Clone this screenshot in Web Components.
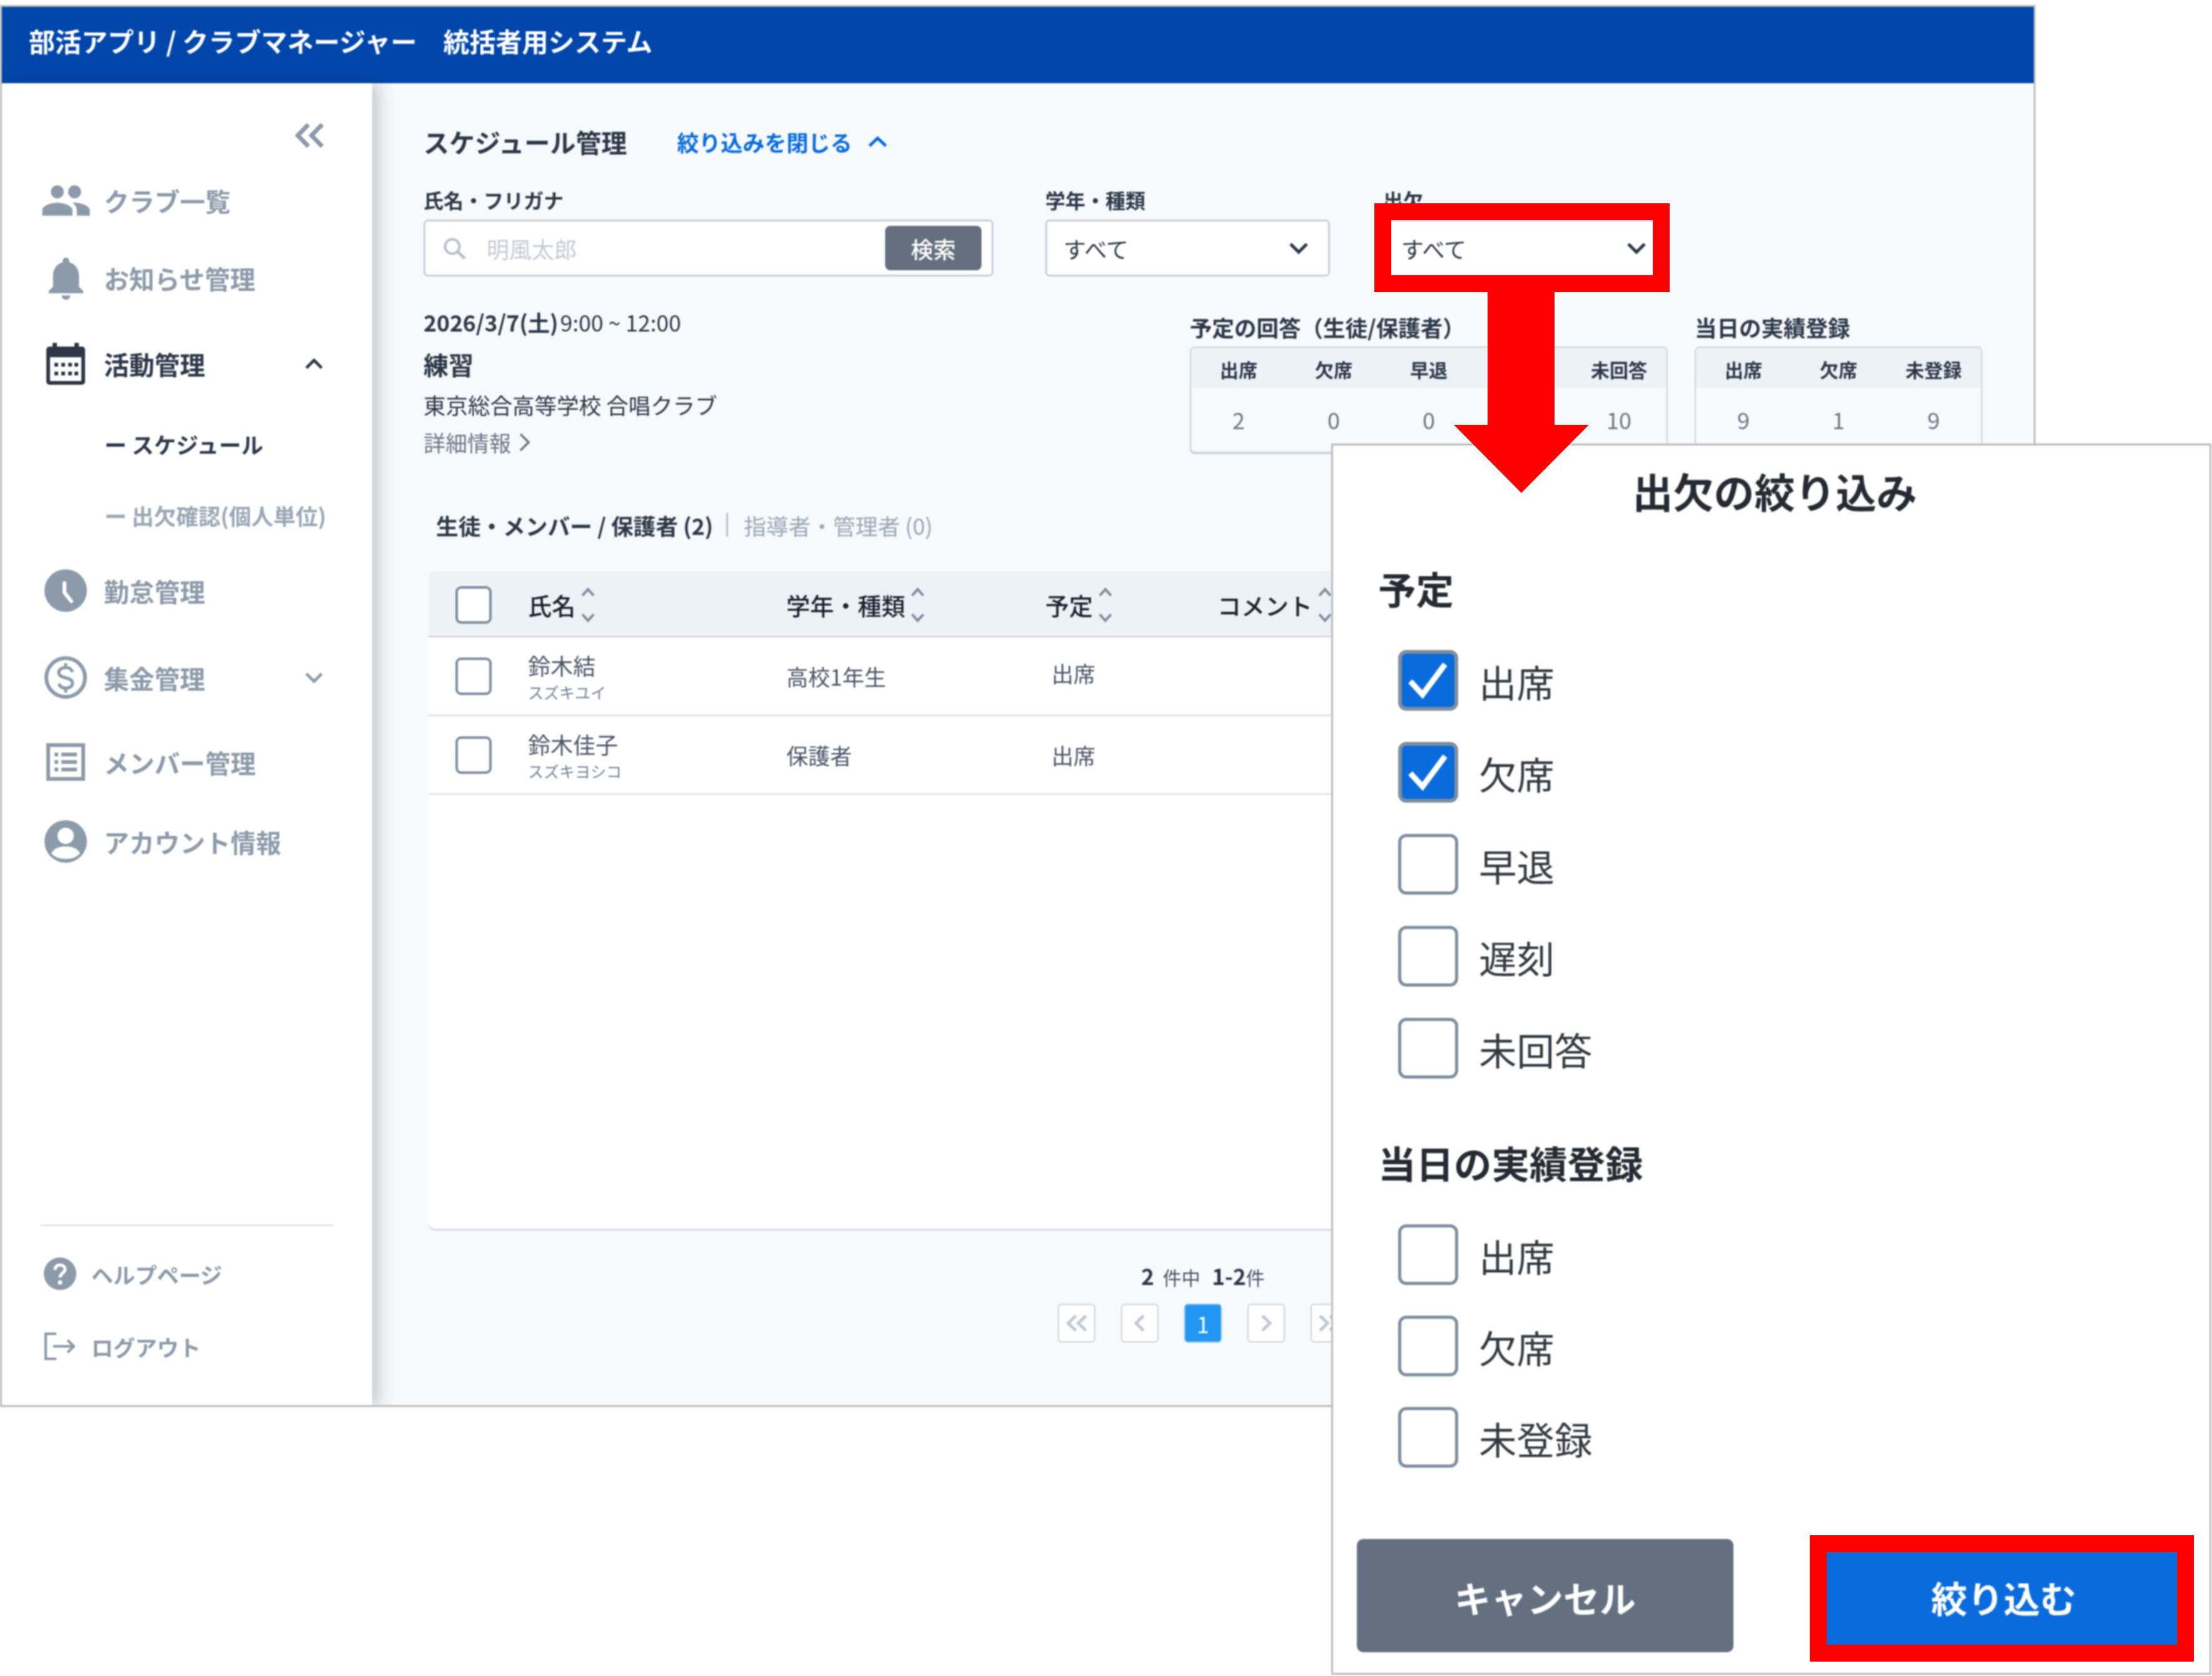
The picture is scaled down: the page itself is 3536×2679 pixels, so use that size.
<!DOCTYPE html>
<html lang="ja">
<head>
<meta charset="utf-8">
<title>スケジュール管理</title>
<style>
html,body{margin:0;padding:0;background:#fff}
body{width:3536px;height:2679px;position:relative;overflow:hidden;font-family:"Noto Sans CJK JP","Noto Sans",sans-serif;color:#2d3748}
</style>
</head>
<body>
<app-window>
  <app-header slot="header">部活アプリ / クラブマネージャー　統括者用システム</app-header>
  <app-sidebar slot="side">
    <nav-item icon="people" label="クラブ一覧" style="margin-top:43px"></nav-item>
    <nav-item icon="bell" label="お知らせ管理" style="margin-top:44px"></nav-item>
    <nav-item icon="calendar" label="活動管理" active chev="up" style="margin-top:57px"></nav-item>
    <nav-sub label="ー スケジュール" active style="margin-top:58px"></nav-sub>
    <nav-sub label="ー 出欠確認(個人単位)" style="margin-top:54px"></nav-sub>
    <nav-item icon="clock" label="勤怠管理" style="margin-top:51px"></nav-item>
    <nav-item icon="dollar" label="集金管理" chev="down" style="margin-top:59px"></nav-item>
    <nav-item icon="list" label="メンバー管理" style="margin-top:55px"></nav-item>
    <nav-item icon="account" label="アカウント情報" style="margin-top:47px"></nav-item>
    <nav-foot slot="foot" icon="help" label="ヘルプページ"></nav-foot>
    <nav-foot slot="foot" icon="logout" label="ログアウト" style="margin-top:56px"></nav-foot>
  </app-sidebar>
  <schedule-page slot="main">
    <page-title>スケジュール管理</page-title>
    <filter-bar></filter-bar>
    <event-summary></event-summary>
    <member-tabs></member-tabs>
    <member-table></member-table>
    <page-nav></page-nav>
  </schedule-page>
</app-window>

<attendance-popup></attendance-popup>
<red-annotations></red-annotations>

<script>
const ICONS={
people:['0 0 24 24','<path fill="currentColor" d="M16 11c1.66 0 2.99-1.34 2.99-3S17.66 5 16 5c-1.66 0-3 1.34-3 3s1.34 3 3 3zm-8 0c1.66 0 2.99-1.34 2.99-3S9.66 5 8 5C6.34 5 5 6.34 5 8s1.34 3 3 3zm0 2c-2.33 0-7 1.17-7 3.5V19h14v-2.5c0-2.33-4.67-3.5-7-3.5zm8 0c-.29 0-.62.02-.97.05 1.16.84 1.97 1.97 1.97 3.45V19h6v-2.5c0-2.33-4.67-3.5-7-3.5z"/>'],
bell:['0 0 24 24','<path fill="currentColor" d="M12 22c1.1 0 2-.9 2-2h-4c0 1.1.89 2 2 2zm6-6v-5c0-3.07-1.64-5.64-4.5-6.32V4c0-.83-.67-1.5-1.5-1.5s-1.5.67-1.5 1.5v.68C7.63 5.36 6 7.92 6 11v5l-2 2v1h16v-1l-2-2z"/>'],
calendar:['0 0 62 67','<path fill="currentColor" d="M10 0h7v6h28V0h7v6h5a5 5 0 0 1 5 5v51a5 5 0 0 1-5 5H5a5 5 0 0 1-5-5V11a5 5 0 0 1 5-5h5z"/><rect x="6" y="23" width="50" height="38" fill="#fff"/><g fill="currentColor"><rect x="13" y="32" width="6" height="6"/><rect x="24" y="32" width="6" height="6"/><rect x="35" y="32" width="6" height="6"/><rect x="45" y="32" width="6" height="6"/><rect x="13" y="46" width="6" height="6"/><rect x="24" y="46" width="6" height="6"/><rect x="35" y="46" width="6" height="6"/><rect x="45" y="46" width="6" height="6"/></g>'],
clock:['0 0 68 68','<circle cx="34" cy="34" r="34" fill="currentColor"/><path d="M32 22v15l11 14" fill="none" stroke="#fff" stroke-width="6" stroke-linecap="round"/>'],
dollar:['0 0 68 68','<circle cx="34" cy="34" r="31" fill="none" stroke="currentColor" stroke-width="6"/><path d="M45 25c-2-5-6-7-11-7-6 0-11 3-11 8 0 11 22 6 22 17 0 5-5 8-11 8-5 0-9-2-11-7M34 11v7M34 51v7" fill="none" stroke="currentColor" stroke-width="5"/>'],
list:['0 0 62 60','<rect x="3" y="3" width="56" height="54" fill="none" stroke="currentColor" stroke-width="6"/><g fill="currentColor"><rect x="13" y="15" width="6" height="6"/><rect x="13" y="27" width="6" height="6"/><rect x="13" y="39" width="6" height="6"/><rect x="24" y="15" width="25" height="6"/><rect x="24" y="27" width="25" height="6"/><rect x="24" y="39" width="25" height="6"/></g>'],
account:['0 0 68 68','<circle cx="34" cy="34" r="34" fill="currentColor"/><circle cx="34" cy="25" r="13" fill="#fff"/><path d="M11 53c5-9 14-11 23-11s18 2 23 11c-5 6-13 9-23 9s-18-3-23-9z" fill="#fff"/>'],
help:['0 0 52 52','<circle cx="26" cy="26" r="26" fill="currentColor"/><path d="M18 20c0-5 3-8 8-8s8 3 8 7c0 6-8 6-8 13" fill="none" stroke="#fff" stroke-width="5"/><circle cx="26" cy="40" r="3.5" fill="#fff"/>'],
logout:['0 0 52 46','<path d="M20 3H3v40h17M15 23h33M38 13l10 10-10 10" fill="none" stroke="currentColor" stroke-width="4"/>'],
dleft:['0 0 49 41','<path d="M23 3 6 20.5 23 38M45 3 28 20.5 45 38" fill="none" stroke="currentColor" stroke-width="7"/>'],
dright:['0 0 49 41','<path d="M4 3 21 20.5 4 38M26 3 43 20.5 26 38" fill="none" stroke="currentColor" stroke-width="7"/>'],
left:['0 0 24 41','<path d="M20 3 4 20.5 20 38" fill="none" stroke="currentColor" stroke-width="7"/>'],
right:['0 0 24 41','<path d="M4 3 20 20.5 4 38" fill="none" stroke="currentColor" stroke-width="7"/>'],
up:['0 0 32 18','<path d="M3 16 16 3l13 13" fill="none" stroke="currentColor" stroke-width="5"/>'],
down:['0 0 32 18','<path d="M3 2l13 13L29 2" fill="none" stroke="currentColor" stroke-width="5"/>'],
search:['0 0 38 36','<circle cx="15" cy="15" r="11.5" fill="none" stroke="currentColor" stroke-width="4"/><path d="M23 23l12 11" fill="none" stroke="currentColor" stroke-width="5"/>'],
more:['0 0 20 30','<path d="M3 2l13 13L3 28" fill="none" stroke="currentColor" stroke-width="3.5"/>'],
sort:['0 0 22 54','<path d="M2 12 11 2l9 10M2 42l9 10 9-10" fill="none" stroke="currentColor" stroke-width="4"/>'],
check:['0 0 56 56','<path d="M9 29l13 14L46 11" fill="none" stroke="#fff" stroke-width="6"/>']
};
function def(name,style,html,init){
  customElements.define(name,class extends HTMLElement{
    connectedCallback(){
      if(this.shadowRoot)return;
      const r=this.attachShadow({mode:'open'});
      const a=n=>this.getAttribute(n);
      r.innerHTML='<style>'+style+'</style>'+(typeof html==='function'?html(a,this):html);
      if(init)init.call(this,r);
    }
  });
}
def('ui-icon',':host{display:inline-block;flex:none;line-height:0}svg{width:100%;height:100%;display:block;overflow:visible}',
  a=>{const i=ICONS[a('name')];return `<svg viewBox="${i[0]}" preserveAspectRatio="none" aria-hidden="true">${i[1]}</svg>`});
def('ui-check',':host{display:block;flex:none;box-sizing:border-box;background:#fff;border:solid #7e8ea0}:host([checked]){background:#0a6bdc;border-width:6px !important}ui-icon{width:100%;height:100%;display:block}',
  a=>a('checked')!==null?'<ui-icon name="check"></ui-icon>':'');

def('app-window',`:host{display:grid;box-sizing:border-box;width:3254px;height:2241px;margin-top:8px;border:3px solid #bcbcbc;grid-template-columns:592px 1fr;grid-template-rows:122px 1fr;background:#f7fafc;overflow:hidden;filter:blur(.9px)}
  .h{grid-column:1/3}.s{position:relative;z-index:1;display:block;min-height:0}.m{display:block;min-width:0;min-height:0}`,
  `<div class="h"><slot name="header"></slot></div><div class="s"><slot name="side"></slot></div><div class="m"><slot name="main"></slot></div>`);
def('app-header',`:host{display:flex;align-items:center;height:122px;box-sizing:border-box;padding:0 0 16px 43px;background:#0046ab;color:#fff;font-size:42px;font-weight:700;white-space:nowrap}`,'<slot></slot>');
def('app-sidebar',`:host{display:flex;flex-direction:column;box-sizing:border-box;height:2116px;background:#fff;box-shadow:8px 0 26px rgba(45,55,72,.3);padding:63px 0 67px}
  .top{height:41px;padding-left:467px}.top ui-icon{width:49px;height:41px;color:#8c9aa9;display:block}
  .bottom{margin-top:auto;margin-left:62px;width:468px}.rule{height:3px;background:#e2e6ea;margin-bottom:46px}`,
  `<div class="top"><ui-icon name="dleft"></ui-icon></div><slot></slot><div class="bottom"><div class="rule"></div><slot name="foot"></slot></div>`);
def('nav-item',`:host{display:flex;align-items:center;height:80px;padding-left:67px;padding-right:78px;font-size:40.5px;font-weight:700;color:#8c9aa9;white-space:nowrap}
  :host([active]){color:#2d3748}.i{width:70px;height:80px;display:flex;align-items:center;justify-content:center;flex:none;margin-right:26px}
  .l{flex:1}.c{width:30px;height:17px}`,
  a=>{const n=a('icon');const s={people:'width:83px;height:83px',bell:'width:83px;height:83px',calendar:'width:62px;height:67px',clock:'width:68px;height:68px',dollar:'width:68px;height:68px',list:'width:62px;height:60px',account:'width:68px;height:68px'}[n];
   return `<span class="i"><ui-icon name="${n}" style="${s}"></ui-icon></span><span class="l">${a('label')}</span>`+(a('chev')?`<ui-icon class="c" name="${a('chev')}"></ui-icon>`:'')});
def('nav-sub',`:host{display:flex;align-items:center;height:60px;padding-left:164px;font-size:35.5px;font-weight:700;color:#9aa7b5;white-space:nowrap}:host([active]){color:#2d3748}`,a=>a('label'));
def('nav-foot',`:host{display:flex;align-items:center;height:60px;font-size:35px;font-weight:700;color:#8c9aa9;white-space:nowrap}ui-icon{width:52px;height:52px;margin:0 24px 0 5px}`,
  a=>`<ui-icon name="${a('icon')}" ${a('icon')==='logout'?'style="height:46px"':''}></ui-icon>${a('label')}`);

def('schedule-page',`:host{display:flex;flex-direction:column;box-sizing:border-box;height:2116px;padding:58px 82px 0}`,'<slot></slot>');
def('page-title',`:host{display:flex;align-items:center;height:70px;font-size:41px;font-weight:700;color:#2d3748;white-space:nowrap}
  a{margin-left:80px;font-size:35px;color:#0a6bdc;display:flex;align-items:center}ui-icon{width:32px;height:17px;margin-left:25px}`,
  `<slot></slot><a>絞り込みを閉じる<ui-icon name="up"></ui-icon></a>`);
def('filter-bar',`:host{display:flex;margin-top:41px}
  label{display:block;height:38px;line-height:34px;font-size:32px;font-weight:700;margin-bottom:11px;white-space:nowrap}
  .box{box-sizing:border-box;height:91px;background:#fff;border:3px solid #c8d0da;border-radius:7px;display:flex;align-items:center;font-size:36px}
  .q{width:911px;padding:0 16px 0 28px}.q ui-icon{width:38px;height:36px;color:#b8c0cc}.q span{flex:1;margin-left:32px;color:#c3cbd5}
  .q b{width:154px;height:71px;display:flex;align-items:center;justify-content:center;background:#64707f;color:#fff;font-weight:500;border-radius:8px}
  .s{width:455px;padding:0 31px 0 26px;justify-content:space-between}.s ui-icon{width:32px;height:18px}`,
  `<div><label>氏名・フリガナ</label><div class="box q"><ui-icon name="search"></ui-icon><span>明風太郎</span><b>検索</b></div></div>
   <div style="margin-left:83px"><label>学年・種類</label><div class="box s"><span>すべて</span><ui-icon name="down"></ui-icon></div></div>
   <div style="margin-left:85px"><label>出欠</label><div class="box s"><span>すべて</span><ui-icon name="down"></ui-icon></div></div>`);
def('event-summary',`:host{display:flex;margin-top:51px;height:236px}
  .info{width:1225px;font-size:35.5px;line-height:44px;white-space:nowrap}.d{font-size:35.5px}.d b{font-weight:700}.d span{margin-left:3px}
  .t{font-size:40px;font-weight:700;line-height:50px;margin-top:20px}.c{margin-top:18px}
  .m{margin-top:16px;color:#6b7785;display:flex;align-items:center;font-size:35px}.m ui-icon{width:20px;height:30px;margin-left:12px}
  .cards{display:flex;gap:43px;padding-top:8px}`,
  `<div class="info"><div class="d"><b>2026/3/7(土)</b><span>9:00 ~ 12:00</span></div><div class="t">練習</div><div class="c">東京総合高等学校 合唱クラブ</div><div class="m">詳細情報<ui-icon name="more"></ui-icon></div></div>
   <div class="cards"><stat-card heading="予定の回答（生徒/保護者）" heads="出席,欠席,早退,,未回答" vals="2,0,0,,10"></stat-card><stat-card heading="当日の実績登録" heads="出席,欠席,未登録" vals="9,1,9"></stat-card></div>`);
def('stat-card',`:host{display:block;white-space:nowrap}
  h3{margin:0 0 9px;font-size:35.5px;line-height:44px;font-weight:700}
  .card{box-sizing:border-box;height:172px;border:2px solid #ccd3dc;border-bottom-width:4px;border-radius:8px;overflow:hidden;display:grid;grid-template-rows:64px 1fr;grid-auto-flow:column;grid-auto-columns:152px}
  .h{background:#edf2f7;font-size:30px;font-weight:700;display:flex;align-items:center;justify-content:center;padding-top:4px}
  .v{font-size:36px;color:#6b7785;display:flex;align-items:center;justify-content:center;padding-bottom:2px}`,
  a=>{const H=a('heads').split(','),V=a('vals').split(',');
    return `<h3>${a('heading')}</h3><div class="card">`+H.map((h,i)=>`<div class="h">${h}</div><div class="v">${V[i]}</div>`).join('')+'</div>'});
def('member-tabs',`:host{display:flex;align-items:center;height:44px;margin-top:88px;padding-left:20px;font-size:35.7px;white-space:nowrap}
  b{font-weight:700}i{width:3px;height:38px;background:#b9c3ce;margin:0 25px 0 21px}span{color:#9aa7b5}`,
  `<b>生徒・メンバー / 保護者 (2)</b><i></i><span>指導者・管理者 (0)</span>`);
const GRID='display:grid;grid-template-columns:116px 413px 414px 275px 1fr;align-items:center;padding-left:43px;box-sizing:border-box;';
def('member-table',`:host{display:block;box-sizing:border-box;height:1051px;margin:52px 0 0 8px;background:#fff;border-radius:10px;box-shadow:0 3px 0 #d5dbe3;overflow:hidden}
  .head{${GRID}height:106px;padding-top:4px;background:#edf2f7;border-bottom:3px solid #d5dbe3;font-size:38px;font-weight:500;color:#1a202c}
  .head span{display:flex;align-items:center;white-space:nowrap}.head ui-icon[name=sort]{width:22px;height:54px;margin-left:9px;color:#7d8ea1}
  .row{${GRID}height:126px;border-bottom:3px solid #e2e6ea;font-size:35px;color:#4a5568}
  .n{font-size:36px;line-height:44px}.n small{display:block;font-size:25px;line-height:30px;color:#718096;margin-top:6px}
  ui-check{width:58px;height:60px;border-width:4px;border-radius:9px}.p{padding-left:10px;margin-bottom:10px}`,
  `<div class="head"><ui-check></ui-check><span>氏名<ui-icon name="sort"></ui-icon></span><span>学年・種類<ui-icon name="sort"></ui-icon></span><span>予定<ui-icon name="sort"></ui-icon></span><span>コメント<ui-icon name="sort"></ui-icon></span></div>
   <div class="row"><ui-check></ui-check><div class="n">鈴木結<small>スズキユイ</small></div><div>高校1年生</div><div class="p">出席</div></div>
   <div class="row"><ui-check></ui-check><div class="n">鈴木佳子<small>スズキヨシコ</small></div><div>保護者</div><div class="p" style="margin-bottom:0">出席</div></div>`);
def('page-nav',`:host{display:flex;flex-direction:column;align-items:center;margin-top:59px}
  .t{height:40px;line-height:32px;font-size:30px;color:#4a5568;white-space:nowrap}.t b{font-size:35px;color:#2d3748;font-weight:700}.t b:first-child{margin-right:7px}.t b:last-of-type{margin-left:12px}
  .r{display:flex;gap:41px;margin-top:21px}
  .b{box-sizing:border-box;width:60px;height:62px;background:#fff;border:2px solid #ccd4de;border-radius:6px;display:flex;align-items:center;justify-content:center;color:#bfcad6;font-size:36px}
  .b ui-icon{height:28px}.a{background:#2196f3;border-color:#7db9ee;color:#fff}`,
  `<div class="t"><b>2</b> 件中 <b>1-2</b>件</div><div class="r">
    <div class="b"><ui-icon name="dleft" style="width:36px"></ui-icon></div><div class="b"><ui-icon name="left" style="width:18px"></ui-icon></div><div class="b a">1</div><div class="b"><ui-icon name="right" style="width:18px"></ui-icon></div><div class="b"><ui-icon name="dright" style="width:36px"></ui-icon></div></div>`);

def('attendance-popup',`:host{position:absolute;left:2128px;top:709px;width:1407px;height:1968px;box-sizing:border-box;border:3px solid #bcbcbc;background:#fff;padding:32px 36px 0 38px;color:#262b33;display:flex;flex-direction:column;white-space:nowrap;filter:blur(.9px)}
  h2{margin:0;text-align:center;font-size:65px;line-height:80px;font-weight:700;padding-left:9px}
  h3{margin:0 0 0 34px;font-size:60.5px;line-height:80px;font-weight:700}
  .list{display:flex;flex-direction:column;margin-left:66px}
  .o{display:flex;align-items:center;gap:33px;font-size:60.5px;line-height:97px;height:97px;color:#33383f}
  .o span{position:relative;top:1px}
  ui-check{width:96px;height:97px;border-width:5px;border-radius:13px}
  .btns{display:flex;gap:134px;margin-top:114px}
  .btns div{flex:none;width:602px;height:181px;box-sizing:border-box;padding-top:4px;border-radius:10px;display:flex;align-items:center;justify-content:center;color:#fff;font-size:58px;font-weight:700;background:#64707f}
  .btns .go{background:#0a6bdc;width:596px}`,
  ()=>{const o=(l,c)=>`<div class="o"><ui-check ${c?'checked':''}></ui-check><span>${l}</span></div>`;
   return `<h2>出欠の絞り込み</h2><h3 style="margin-top:76px">予定</h3><div class="list" style="margin-top:59px;gap:50px">${o('出席',1)+o('欠席',1)+o('早退')+o('遅刻')+o('未回答')}</div>
   <h3 style="margin-top:94px">当日の実績登録</h3><div class="list" style="margin-top:59px;gap:49px">${o('出席')+o('欠席')+o('未登録')}</div>
   <div class="btns"><div>キャンセル</div><div class="go">絞り込む</div></div>`});
def('red-box',`:host{position:absolute;box-sizing:border-box;border:27px solid #f00;pointer-events:none}`,'');
def('red-annotations',`:host{position:absolute;left:0;top:0;width:3536px;height:2679px;pointer-events:none}svg{position:absolute;left:0;top:0;width:3536px;height:2679px}`,
  `<svg viewBox="0 0 3536 2679" aria-hidden="true"><polygon fill="#f00" points="2378,466 2485,466 2485,679 2540,679 2432,788 2324,679 2378,679"/></svg>
   <red-box style="left:2197px;top:325px;width:472px;height:142px"></red-box>
   <red-box style="left:2893px;top:2454px;width:614px;height:202px"></red-box>`);
</script>
</body>
</html>
